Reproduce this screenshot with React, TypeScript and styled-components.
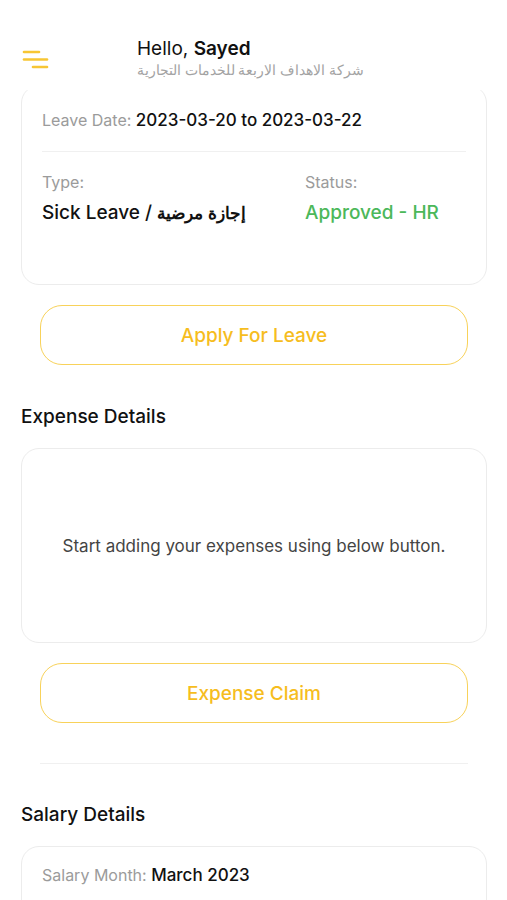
import React, { useLayoutEffect, useRef } from "react";
import styled, { createGlobalStyle } from "styled-components";

const GlobalStyle = createGlobalStyle`
  html, body {
    margin: 0;
    padding: 0;
    background: #ffffff;
  }
  body {
    font-family: Inter, "Noto Sans", "Liberation Sans", sans-serif;
    color: #111111;
  }
`;

const Frame = styled.div`
  height: 100vh;
  display: flex;
  flex-direction: column;
  overflow: hidden;
  background: #ffffff;
`;

const Header = styled.header`
  height: 90px;
  flex-shrink: 0;
  display: flex;
  align-items: flex-start;
  padding: 38px 0 0 22px;
  box-sizing: border-box;
  background: #ffffff;
`;

const MenuButton = styled.button`
  width: 28px;
  height: 22px;
  margin-top: 11px;
  padding: 0;
  border: none;
  background: none;
  cursor: pointer;
  display: flex;
`;

const Greeting = styled.div`
  margin-left: 87px;
  display: flex;
  flex-direction: column;
`;

const Hello = styled.div`
  font-size: 19px;
  line-height: 22px;
  color: #111111;

  b {
    font-weight: 600;
  }
`;

const Company = styled.div`
  font-family: "Noto Sans", "Liberation Sans", sans-serif;
  font-size: 14px;
  line-height: 20px;
  color: #a3a3a3;
  direction: rtl;
  text-align: left;
`;

const Scroller = styled.div`
  flex: 1;
  overflow: hidden;
`;

const Content = styled.div`
  padding: 0 20px 40px 21px;
  display: flex;
  flex-direction: column;
`;

const SectionTitle = styled.h2<{ $top?: number }>`
  margin: ${(p) => p.$top ?? 0}px 0 19px;
  font-size: 19px;
  line-height: 24px;
  font-weight: 500;
  color: #111111;
`;

const Card = styled.div<{ $height?: number; $padTop?: number }>`
  border: 1px solid #ececec;
  border-radius: 18px;
  background: #ffffff;
  padding: ${(p) => p.$padTop ?? 16}px 20px 16px;
  box-sizing: border-box;
  min-height: ${(p) => p.$height ?? 0}px;
`;

const EmptyCard = styled(Card)`
  display: flex;
  align-items: center;
  justify-content: center;
  font-size: 17px;
  color: #444444;
`;

const Line = styled.div`
  font-size: 16px;
  line-height: 24px;
`;

const Label = styled.span`
  color: #9b9b9b;
  font-weight: 400;
  font-size: 16px;
`;

const Value = styled.span<{ $color?: string; $size?: number }>`
  font-weight: 500;
  color: ${(p) => p.$color ?? "#111111"};
  font-size: ${(p) => p.$size ?? 17}px;
`;

const Divider = styled.hr<{ $inset?: number; $above?: number; $below?: number }>`
  border: none;
  border-top: 1px solid #f0f0f0;
  margin: ${(p) => p.$above ?? 15}px ${(p) => p.$inset ?? 0}px ${(p) => p.$below ?? 15}px;
`;

const Grid = styled.div`
  display: grid;
  grid-template-columns: 263px 1fr;
  padding-top: 3px;
`;

const Cell = styled.div`
  display: flex;
  flex-direction: column;
  gap: 7px;
  line-height: 24px;
`;

const Arabic = styled.span`
  font-family: "Noto Sans", "Liberation Sans", sans-serif;
  font-weight: 600;
  font-size: 17px;
`;

const OutlineButton = styled.button`
  margin: 20px 19px 0;
  height: 60px;
  border: 1.5px solid #f8d25a;
  border-radius: 22px;
  background: #ffffff;
  color: #f6bd1e;
  font-family: Inter, "Liberation Sans", sans-serif;
  font-size: 19px;
  font-weight: 500;
  cursor: pointer;
`;

const Menu = () => (
  <svg width="28" height="22" viewBox="0 0 28 22" fill="none">
    <g stroke="#f7c634" strokeWidth="2.6" strokeLinecap="round">
      <line x1="2" y1="3" x2="17" y2="3" />
      <line x1="2" y1="10.5" x2="25" y2="10.5" />
      <line x1="11" y1="18" x2="25" y2="18" />
    </g>
  </svg>
);

export default function App() {
  const scrollRef = useRef<HTMLDivElement>(null);
  const leaveRef = useRef<HTMLDivElement>(null);

  // the list is shown scrolled a little, so the leave card slides under the header
  useLayoutEffect(() => {
    const s = scrollRef.current;
    const c = leaveRef.current;
    if (s && c) s.scrollTop = c.offsetTop - s.offsetTop + 5;
  }, []);

  return (
    <>
      <GlobalStyle />
      <Frame>
        <Header>
          <MenuButton aria-label="menu">
            <Menu />
          </MenuButton>
          <Greeting>
            <Hello>
              Hello, <b>Sayed</b>
            </Hello>
            <Company>شركة الاهداف الاربعة للخدمات التجارية</Company>
          </Greeting>
        </Header>
        <Scroller ref={scrollRef}>
          <Content>
            <Card ref={leaveRef} $height={200} $padTop={22}>
              <Line>
                <Label>Leave Date: </Label>
                <Value>2023-03-20 to 2023-03-22</Value>
              </Line>
              <Divider $above={19} />
              <Grid>
                <Cell>
                  <Label>Type:</Label>
                  <Value $size={19}>
                    Sick Leave / <Arabic>إجازة مرضية</Arabic>
                  </Value>
                </Cell>
                <Cell>
                  <Label>Status:</Label>
                  <Value $size={19} $color="#4cb85a">
                    Approved - HR
                  </Value>
                </Cell>
              </Grid>
            </Card>
            <OutlineButton>Apply For Leave</OutlineButton>

            <SectionTitle $top={40}>Expense Details</SectionTitle>
            <EmptyCard $height={195}>Start adding your expenses using below button.</EmptyCard>
            <OutlineButton>Expense Claim</OutlineButton>
            <Divider $inset={19} $above={40} $below={39} />

            <SectionTitle>Salary Details</SectionTitle>
            <Card $height={120}>
              <Line>
                <Label>Salary Month: </Label>
                <Value>March 2023</Value>
              </Line>
            </Card>
          </Content>
        </Scroller>
      </Frame>
    </>
  );
}
